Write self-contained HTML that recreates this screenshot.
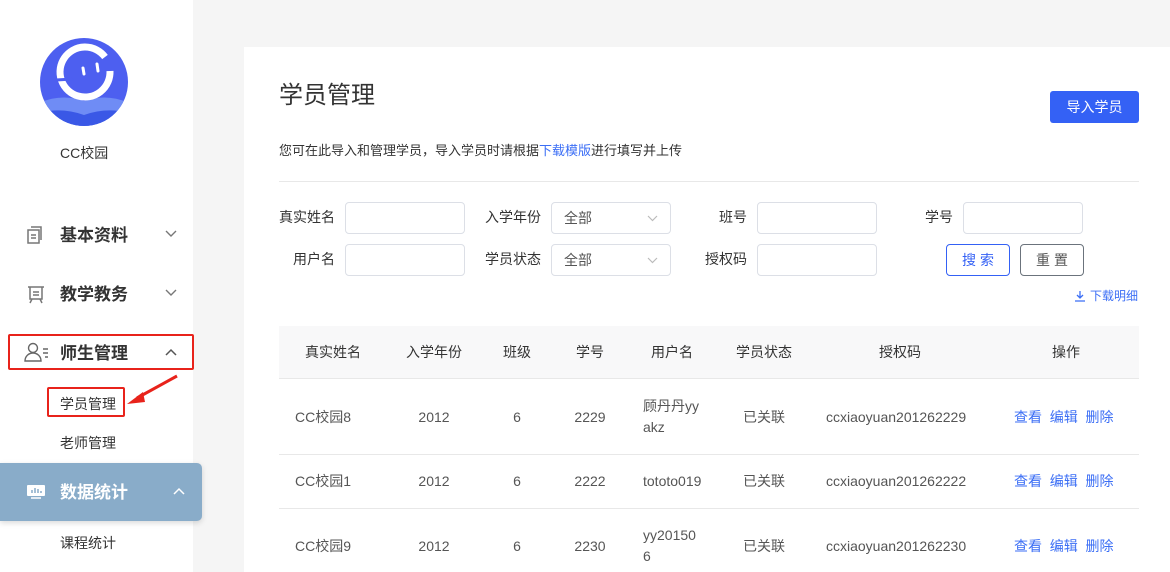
<!DOCTYPE html>
<html><head><meta charset="utf-8"><style>
*{margin:0;padding:0;box-sizing:border-box}
body{width:1170px;height:572px;overflow:hidden;background:#f5f5f5;font-family:"Liberation Sans","Noto Sans CJK SC",sans-serif;color:#333;position:relative;line-height:20px}
.a{position:absolute}
.side{left:0;top:0;width:193px;height:572px;background:#fff}
.menu{font-size:17px;font-weight:bold;color:#333}
.sub{font-size:14px;color:#333}
.card{left:244px;top:47px;width:926px;height:525px;background:#fff}
.lbl{font-size:14px;color:#333;text-align:right}
.inp{border:1px solid #dcdfe6;border-radius:4px;height:32px;width:120px;background:#fff}
.sel{font-size:14px;color:#555;padding-left:12px;line-height:30px}
.th{font-size:14px;color:#333;text-align:center}
.td{font-size:14px;color:#555;text-align:center}
.op{font-size:14px;color:#3b6ef5}
</style></head><body>
<div class="a side"></div>
<svg class="a" style="left:39px;top:37px" width="90" height="90" viewBox="0 0 90 90">
<defs><clipPath id="c"><circle cx="45" cy="45" r="44"/></clipPath></defs>
<circle cx="45" cy="45" r="44" fill="#4d5ff0"/>
<g clip-path="url(#c)"><path d="M0 66 Q22 56 45 64 Q68 56 90 66 V90 H0Z" fill="#6f8cf5"/><path d="M0 76 Q22 70 45 78 Q68 70 90 76 V90 H0Z" fill="#3a58e6"/></g>
<path d="M66 20 A25 25 0 1 0 71 34" fill="none" stroke="#fff" stroke-width="7"/>
<path d="M17 43 L34 42" stroke="#4d5ff0" stroke-width="3"/>
<path d="M44 31 L45 37 M58 27 L59 34" stroke="#fff" stroke-width="3" stroke-linecap="round"/>
</svg>
<div class="a sub" style="left:60px;top:143px">CC校园</div>
<svg class="a" style="left:26px;top:225px" width="18" height="20" viewBox="0 0 18 20" fill="none" stroke="#777" stroke-width="1.5"><rect x="2" y="5" width="11" height="13"/><path d="M5 2h10v13M5 10h5M5 13h5"/></svg>
<div class="a menu" style="left:60px;top:226px">基本资料</div>
<svg class="a" style="left:165px;top:230px" width="12" height="8" viewBox="0 0 12 8" fill="none" stroke="#777" stroke-width="1.4"><path d="M1 1l5 5 5-5"/></svg>
<svg class="a" style="left:26px;top:284px" width="20" height="20" viewBox="0 0 20 20" fill="none" stroke="#777" stroke-width="1.5"><path d="M2 3h16M4 3v12h12V3M7 8h6M7 11h6M6 15l-2 4M14 15l2 4"/></svg>
<div class="a menu" style="left:60px;top:285px">教学教务</div>
<svg class="a" style="left:165px;top:289px" width="12" height="8" viewBox="0 0 12 8" fill="none" stroke="#777" stroke-width="1.4"><path d="M1 1l5 5 5-5"/></svg>
<div class="a" style="left:8px;top:334px;width:186px;height:36px;border:2px solid #e8231b;border-radius:2px"></div>
<svg class="a" style="left:24px;top:342px" width="26" height="20" viewBox="0 0 26 20" fill="none" stroke="#666" stroke-width="1.4"><circle cx="9" cy="6" r="4.5"/><path d="M1 19c0-5 4-8 8-8s8 3 8 8zM19 7h5M19 11h5M21 15h3"/></svg>
<div class="a menu" style="left:60px;top:344px">师生管理</div>
<svg class="a" style="left:165px;top:348px" width="12" height="8" viewBox="0 0 12 8" fill="none" stroke="#555" stroke-width="1.5"><path d="M1 7l5-5 5 5"/></svg>
<div class="a" style="left:47px;top:387px;width:78px;height:30px;border:2px solid #e8231b;border-radius:2px"></div>
<div class="a sub" style="left:60px;top:394px">学员管理</div>
<svg class="a" style="left:125px;top:372px" width="55" height="40" viewBox="0 0 55 40"><path d="M52 4 L12 26" stroke="#e8231b" stroke-width="3"/><path d="M2 32 L18 20 L20 30Z" fill="#e8231b"/></svg>
<div class="a sub" style="left:60px;top:433px">老师管理</div>
<div class="a" style="left:0;top:463px;width:202px;height:58px;background:#89acc9;border-radius:0 5px 5px 0;box-shadow:0 2px 6px rgba(0,0,0,.15)"></div>
<svg class="a" style="left:26px;top:484px" width="20" height="16" viewBox="0 0 20 16"><rect x="1" y="1" width="18" height="11" rx="1" fill="#fff"/><path d="M6 9V6M9 9V4M12 9V5M15 9V7" stroke="#89acc9" stroke-width="1.5"/><path d="M5 14h10" stroke="#fff" stroke-width="1.5"/></svg>
<div class="a menu" style="left:60px;top:483px;color:#fff">数据统计</div>
<svg class="a" style="left:173px;top:487px" width="12" height="8" viewBox="0 0 12 8" fill="none" stroke="#fff" stroke-width="1.5"><path d="M1 7l5-5 5 5"/></svg>
<div class="a sub" style="left:60px;top:533px">课程统计</div>

<div class="a card"></div>
<div class="a" style="left:279px;top:81px;font-size:24px;color:#333;line-height:30px">学员管理</div>
<div class="a" style="left:1050px;top:91px;width:89px;height:32px;background:#3461f5;border-radius:3px;color:#fff;font-size:14px;text-align:center;line-height:32px">导入学员</div>
<div class="a" style="left:279px;top:141px;font-size:13px;color:#333">您可在此导入和管理学员，导入学员时请根据<span style="color:#3b6ef5">下载模版</span>进行填写并上传</div>
<div class="a" style="left:279px;top:181px;width:860px;height:1px;background:#e8e8e8"></div>

<div class="a lbl" style="left:279px;top:207px">真实姓名</div>
<div class="a inp" style="left:345px;top:202px"></div>
<div class="a lbl" style="left:485px;top:207px">入学年份</div>
<div class="a inp sel" style="left:551px;top:202px">全部<svg style="position:absolute;right:12px;top:12px" width="11" height="7" viewBox="0 0 11 7" fill="none" stroke="#bbb" stroke-width="1.2"><path d="M1 1l4.5 4.5L10 1"/></svg></div>
<div class="a lbl" style="left:719px;top:207px">班号</div>
<div class="a inp" style="left:757px;top:202px"></div>
<div class="a lbl" style="left:925px;top:207px">学号</div>
<div class="a inp" style="left:963px;top:202px"></div>
<div class="a lbl" style="left:293px;top:249px">用户名</div>
<div class="a inp" style="left:345px;top:244px"></div>
<div class="a lbl" style="left:485px;top:249px">学员状态</div>
<div class="a inp sel" style="left:551px;top:244px">全部<svg style="position:absolute;right:12px;top:12px" width="11" height="7" viewBox="0 0 11 7" fill="none" stroke="#bbb" stroke-width="1.2"><path d="M1 1l4.5 4.5L10 1"/></svg></div>
<div class="a lbl" style="left:705px;top:249px">授权码</div>
<div class="a inp" style="left:757px;top:244px"></div>
<div class="a" style="left:946px;top:244px;width:64px;height:32px;border:1px solid #3461f5;border-radius:4px;color:#3461f5;font-size:14px;text-align:center;line-height:30px;letter-spacing:4px;padding-left:4px">搜索</div>
<div class="a" style="left:1020px;top:244px;width:64px;height:32px;border:1px solid #6b737c;border-radius:4px;color:#555;font-size:14px;text-align:center;line-height:30px;letter-spacing:4px;padding-left:4px">重置</div>
<svg class="a" style="left:1074px;top:290px" width="12" height="12" viewBox="0 0 12 12" fill="none" stroke="#3b6ef5" stroke-width="1.3"><path d="M6 1v7M3 5l3 3 3-3M1 11h10"/></svg>
<div class="a" style="left:1090px;top:286px;font-size:12px;color:#3b6ef5">下载明细</div>

<div class="a" style="left:279px;top:326px;width:860px;height:53px;background:#f8f8f9;border-bottom:1px solid #e8e8e8"></div>
<div class="a" style="left:279px;top:454px;width:860px;height:1px;background:#e8e8e8"></div>
<div class="a" style="left:279px;top:508px;width:860px;height:1px;background:#e8e8e8"></div>
<div class="a th" style="left:293px;top:342px;width:80px">真实姓名</div>
<div class="a th" style="left:394px;top:342px;width:80px">入学年份</div>
<div class="a th" style="left:487px;top:342px;width:60px">班级</div>
<div class="a th" style="left:560px;top:342px;width:60px">学号</div>
<div class="a th" style="left:632px;top:342px;width:80px">用户名</div>
<div class="a th" style="left:724px;top:342px;width:80px">学员状态</div>
<div class="a th" style="left:850px;top:342px;width:100px">授权码</div>
<div class="a th" style="left:1036px;top:342px;width:60px">操作</div>

<div class="a td" style="left:295px;top:407px;text-align:left">CC校园8</div>
<div class="a td" style="left:394px;top:407px;width:80px">2012</div>
<div class="a td" style="left:487px;top:407px;width:60px">6</div>
<div class="a td" style="left:560px;top:407px;width:60px">2229</div>
<div class="a td" style="left:643px;top:396px;text-align:left;line-height:21px">顾丹丹yy<br>akz</div>
<div class="a td" style="left:724px;top:407px;width:80px">已关联</div>
<div class="a td" style="left:826px;top:407px;text-align:left">ccxiaoyuan201262229</div>
<div class="a op" style="left:1014px;top:407px">查看&nbsp;&nbsp;编辑&nbsp;&nbsp;删除</div>

<div class="a td" style="left:295px;top:471px;text-align:left">CC校园1</div>
<div class="a td" style="left:394px;top:471px;width:80px">2012</div>
<div class="a td" style="left:487px;top:471px;width:60px">6</div>
<div class="a td" style="left:560px;top:471px;width:60px">2222</div>
<div class="a td" style="left:643px;top:471px;text-align:left">tototo019</div>
<div class="a td" style="left:724px;top:471px;width:80px">已关联</div>
<div class="a td" style="left:826px;top:471px;text-align:left">ccxiaoyuan201262222</div>
<div class="a op" style="left:1014px;top:471px">查看&nbsp;&nbsp;编辑&nbsp;&nbsp;删除</div>

<div class="a td" style="left:295px;top:536px;text-align:left">CC校园9</div>
<div class="a td" style="left:394px;top:536px;width:80px">2012</div>
<div class="a td" style="left:487px;top:536px;width:60px">6</div>
<div class="a td" style="left:560px;top:536px;width:60px">2230</div>
<div class="a td" style="left:643px;top:525px;text-align:left;line-height:21px">yy20150<br>6</div>
<div class="a td" style="left:724px;top:536px;width:80px">已关联</div>
<div class="a td" style="left:826px;top:536px;text-align:left">ccxiaoyuan201262230</div>
<div class="a op" style="left:1014px;top:536px">查看&nbsp;&nbsp;编辑&nbsp;&nbsp;删除</div>
</body></html>
